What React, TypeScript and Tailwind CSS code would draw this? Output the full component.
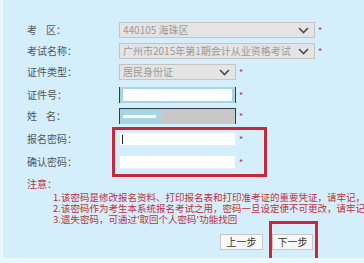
import React from 'react'

const FONT = { fontFamily: '"Noto Sans CJK SC", "Noto Sans", sans-serif' }

function Chevron() {
  return (
    <svg width="11" height="7" viewBox="0 0 11 7" className="shrink-0">
      <path d="M1 1 L5.5 5.5 L10 1" fill="none" stroke="#4a4a4a" strokeWidth="1.6" />
    </svg>
  )
}

function Star() {
  return <span className="ml-[3px] text-[9px] leading-none text-[#b03060]">*</span>
}

function Select({ text, w }: { text: string; w: string }) {
  return (
    <div className={`flex h-[16px] items-center justify-between border border-[#c4c4c4] bg-[#e4e4e4] pl-[3px] pr-[5px] ${w}`}>
      <span className="whitespace-nowrap text-[10px] leading-none text-[#9a9a9a]">{text}</span>
      <Chevron />
    </div>
  )
}

function Row({ label, mt, children }: { label: string; mt: string; children: React.ReactNode }) {
  return (
    <div className={`flex h-[16px] items-center ${mt}`}>
      <div className="w-[116px] shrink-0 whitespace-pre pl-[24px] text-[10px] leading-none text-[#555]">{label}</div>
      {children}
    </div>
  )
}

export default function App() {
  return (
    <div className="h-[263px] w-[364px] overflow-hidden bg-[#eaf7fd] pb-[5px] pl-[3px]" style={FONT}>
      <div className="relative h-full w-full overflow-hidden bg-[#d4eefb] pt-[22px]">
        <Row label="考    区：" mt="mt-0">
          <Select text="440105 海珠区" w="w-[196px]" />
          <Star />
        </Row>
        <Row label="考试名称：" mt="mt-[5px]">
          <Select text="广州市2015年第1期会计从业资格考试" w="w-[196px]" />
          <Star />
        </Row>
        <Row label="证件类型：" mt="mt-[5px]">
          <Select text="居民身份证" w="w-[117px]" />
          <Star />
        </Row>
        <Row label="证件号：" mt="mt-[7px]">
          <div className="flex h-[16px] w-[117px] items-center border-x border-[#2e3c4c] bg-[#a6d6e4] px-[3px] py-[2px]">
            <div className="h-full w-full bg-white" />
          </div>
          <Star />
        </Row>
        <Row label="姓    名：" mt="mt-[5px]">
          <div className="flex h-[16px] w-[117px] border-x border-t border-[#2e3c4c]">
            <div className="flex w-[42px] items-center bg-[#a6d6e4] pl-[3px]">
              <div className="h-[3px] w-[33px] bg-white" />
            </div>
            <div className="flex-1 bg-[#c8c8c8]" />
          </div>
          <Star />
        </Row>
        <Row label="报名密码：" mt="mt-[7px]">
          <div className="flex h-[14px] w-[117px] items-center border border-[#e4eef2] bg-white pl-[2px]">
            <div className="h-[9px] w-px bg-[#222]" />
          </div>
          <Star />
        </Row>
        <Row label="确认密码：" mt="mt-[7px]">
          <div className="h-[14px] w-[117px] border border-[#e4eef2] bg-white" />
          <Star />
        </Row>

        <div className="mt-[9px] pl-[24px] text-[10px] leading-none text-[#c0303a]">注意：</div>
        <div className="mt-[3px] whitespace-nowrap pl-[50px] text-[9.5px] leading-[11px] text-[#c0303a]">
          <div>1.该密码是修改报名资料、打印报名表和打印准考证的重要凭证，请牢记，妥善保管</div>
          <div>2.该密码作为考生本系统报名考试之用，密码一旦设定便不可更改，请牢记</div>
          <div>3.遗失密码，可通过'取回个人密码'功能找回</div>
        </div>

        <div className="mt-[9px] flex gap-[9px] pl-[217px]">
          <button className="h-[16px] w-[43px] border border-[#c8c8c8] bg-[#f8f8f8] text-[10px] leading-none text-[#333]">
            上一步
          </button>
          <button className="h-[16px] w-[41px] border border-[#c8c8c8] bg-[#f8f8f8] text-[10px] leading-none text-[#333]">
            下一步
          </button>
        </div>

        {/* 红色标注框 */}
        <div className="pointer-events-none absolute left-[109px] top-[127px] h-[50px] w-[155px] border-[3px] border-[#c8283a]" />
        <div className="pointer-events-none absolute left-[266px] top-[221px] h-[50px] w-[49px] border-[3px] border-[#c8283a]" />
      </div>
    </div>
  )
}
